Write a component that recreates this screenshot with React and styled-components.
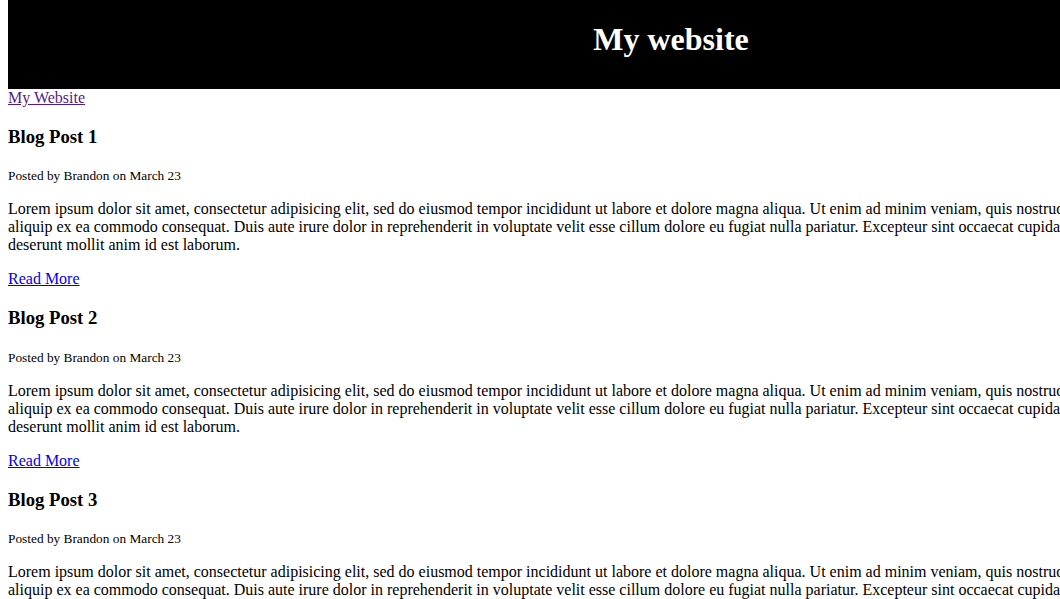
import styled, { createGlobalStyle } from 'styled-components';

const GlobalStyle = createGlobalStyle`
	html {
		overflow: hidden;
	}
	body {
		margin: 0 8px 8px;
		width: 1326px;
		font-family: "Liberation Serif", "Times New Roman", serif;
		font-size: 16px;
		color: #000;
		background: #fff;
	}
`;

const lorem =
	'Lorem ipsum dolor sit amet, consectetur adipisicing elit, sed do eiusmod tempor incididunt ut labore et dolore magna aliqua. Ut enim ad minim veniam, quis nostrud exercitation ullamco laboris nisi ut aliquip ex ea commodo consequat. Duis aute irure dolor in reprehenderit in voluptate velit esse cillum dolore eu fugiat nulla pariatur. Excepteur sint occaecat cupidatat non proident, sunt in culpa qui officia deserunt mollit anim id est laborum.';

const posts = [1, 2, 3];

export default function App() {
	return (
		<>
			<GlobalStyle />
			<Header>
				<Title>My website</Title>
			</Header>
			<Nav>
				<HomeLink href="#">My Website</HomeLink>
			</Nav>
			<main>
				{posts.map((n) => (
					<Post key={n}>
						<PostTitle>Blog Post {n}</PostTitle>
						<Meta>
							<small>Posted by Brandon on March 23</small>
						</Meta>
						<Text>{lorem}</Text>
						<Text>
							<ReadMore href="#">Read More</ReadMore>
						</Text>
					</Post>
				))}
			</main>
		</>
	);
}

const Header = styled.header`
	display: flow-root;
	height: 89px;
	background-color: #000;
	text-align: center;
`;

const Title = styled.h1`
	margin: 21px 0 0;
	font-size: 32px;
	font-weight: bold;
	color: #fff;
`;

const Nav = styled.nav`
	display: block;
`;

const HomeLink = styled.a`
	color: #551a8b;
	text-decoration: underline;
`;

const Post = styled.article`
	display: block;
`;

const PostTitle = styled.h3`
	margin: 18.72px 0;
	font-size: 18.72px;
	font-weight: bold;
`;

const Meta = styled.p`
	margin: 16px 0;

	small {
		font-size: 13.33px;
	}
`;

const Text = styled.p`
	margin: 16px 0;
`;

const ReadMore = styled.a`
	color: #0000ee;
	text-decoration: underline;
`;
